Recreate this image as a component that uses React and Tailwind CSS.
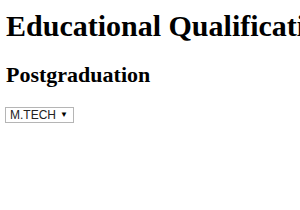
import React from 'react';

const App = () => {
    return (
        <div className="w-[300px] h-[210px] overflow-hidden bg-white px-[5px] pt-[8px] font-['Liberation_Serif',serif] text-black">
            <h1 className="whitespace-nowrap pl-[1px] text-[30px] font-bold leading-[36px]">Educational Qualification</h1>
            <h2 className="mt-[18px] pl-[1px] text-[22px] font-bold leading-[26px]">Postgraduation</h2>
            <div className="mt-[19px] inline-flex h-[16px] items-center gap-[4px] border border-[#b5b5b5] bg-white pl-[4px] pr-[5px] font-['Liberation_Sans',sans-serif] text-[12px] leading-none text-[#222]">
                <span>M.TECH</span>
                <span className="text-[8px] text-black">▼</span>
            </div>
        </div>
    );
};

export default App;
